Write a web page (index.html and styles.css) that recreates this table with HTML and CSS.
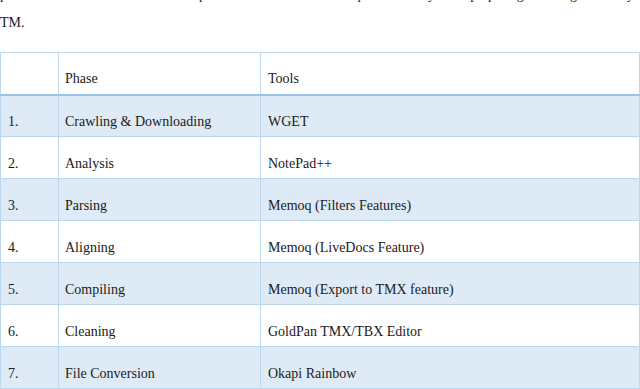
FILE: index.html
```html
<!DOCTYPE html>
<html>
<head>
<meta charset="utf-8">
<link rel="stylesheet" href="styles.css">
</head>
<body>
<div class="page">
<p class="intro"><span class="line">phases were carried out with specific tools and the output is ready for preparing the legal library</span><span class="line-end">TM.</span></p>
<table class="tools">
<colgroup><col class="c1"><col class="c2"><col class="c3"></colgroup>
<tr class="head"><td></td><td>Phase</td><td>Tools</td></tr>
<tr class="band"><td>1.</td><td>Crawling &amp; Downloading</td><td>WGET</td></tr>
<tr><td>2.</td><td>Analysis</td><td>NotePad++</td></tr>
<tr class="band"><td>3.</td><td>Parsing</td><td>Memoq (Filters Features)</td></tr>
<tr><td>4.</td><td>Aligning</td><td>Memoq (LiveDocs Feature)</td></tr>
<tr class="band"><td>5.</td><td>Compiling</td><td>Memoq (Export to TMX feature)</td></tr>
<tr><td>6.</td><td>Cleaning</td><td>GoldPan TMX/TBX Editor</td></tr>
<tr class="band"><td>7.</td><td>File Conversion</td><td>Okapi Rainbow</td></tr>
</table>
</div>
</body>
</html>
```
FILE: styles.css
```css
html, body {
  margin: 0;
  padding: 0;
  background: #ffffff;
}
body {
  font-family: "Liberation Serif", "Times New Roman", serif;
  color: #1a1a1a;
  font-size: 14px;
  overflow: hidden;
  width: 640px;
  height: 389px;
}
.page {
  width: 640px;
}
.intro {
  margin: -19px 0 0 0;
  line-height: 28px;
  width: 634px;
}
.intro .line {
  display: block;
  text-align: justify;
  text-align-last: justify;
}
.intro .line-end {
  display: block;
}
.tools {
  margin-top: 15px;
  border-collapse: collapse;
  width: 639px;
  table-layout: fixed;
}
.c1 { width: 58px; }
.c2 { width: 202px; }
.c3 { width: 379px; }
.tools td {
  border: 1px solid #bdd7ee;
  height: 42px;
  box-sizing: border-box;
  padding: 16px 6px 5px 7px;
  vertical-align: middle;
  line-height: 17px;
}
.tools td:nth-child(2) { padding-left: 6px; }
.tools .head td {
  border-bottom: 2px solid #9cc2e5;
}
.band td {
  background: #deeaf6;
}
```
